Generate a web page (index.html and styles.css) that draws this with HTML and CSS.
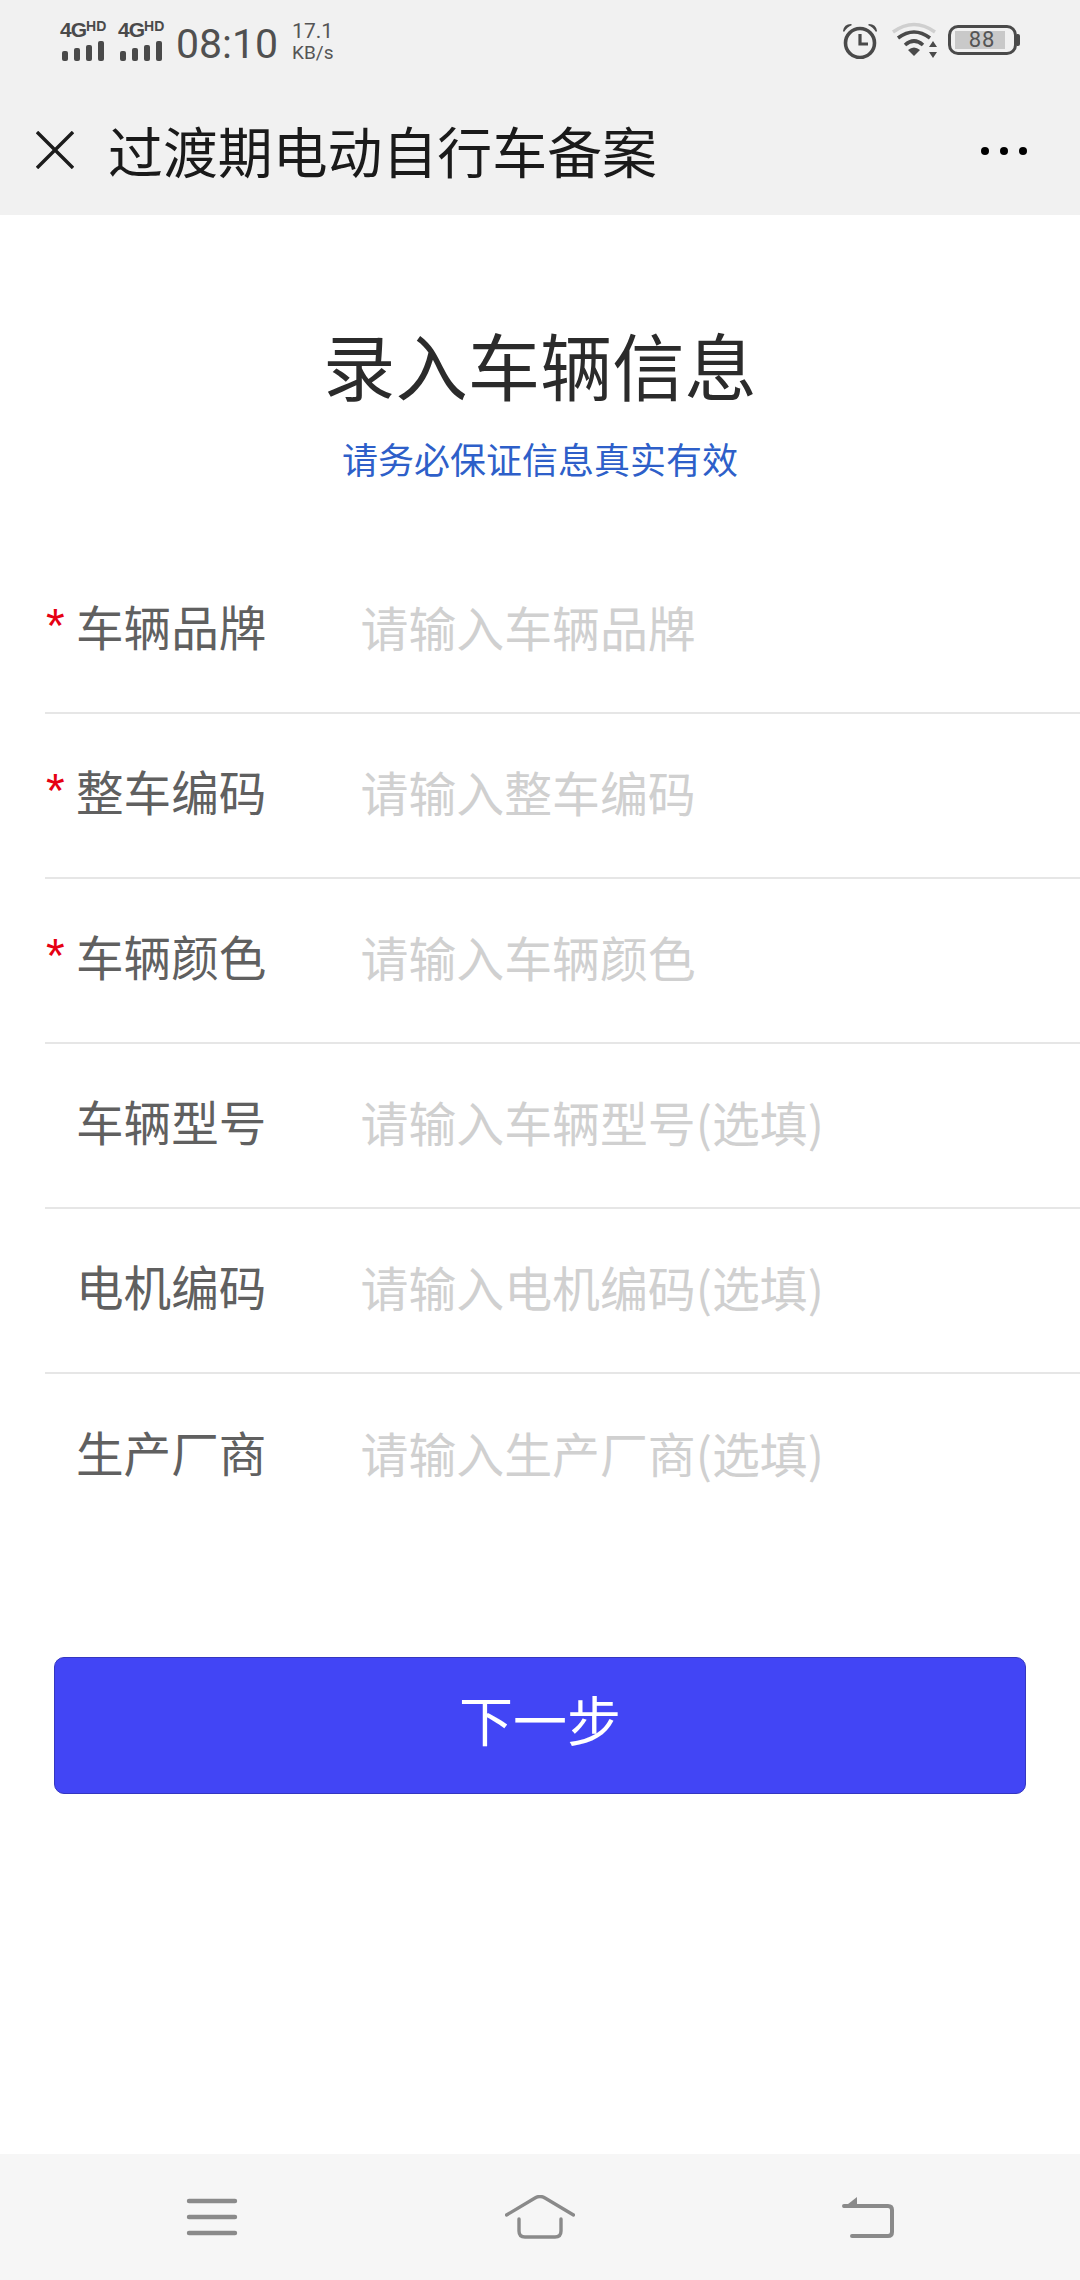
FILE: index.html
```html
<!DOCTYPE html>
<html lang="zh-CN">
<head>
<meta charset="utf-8">
<title>过渡期电动自行车备案</title>
<link rel="stylesheet" href="styles.css">
</head>
<body>
<div class="screen">
  <header class="top">
    <div class="status">
      <div class="status-left">
        <div class="sim">
          <div class="sim-label"><span class="g">4G</span><span class="hd">HD</span></div>
          <div class="bars"><i class="b1"></i><i class="b2"></i><i class="b3"></i><i class="b4"></i></div>
        </div>
        <div class="sim">
          <div class="sim-label"><span class="g">4G</span><span class="hd">HD</span></div>
          <div class="bars"><i class="b1"></i><i class="b2"></i><i class="b3"></i><i class="b4"></i></div>
        </div>
        <div class="time">08:10</div>
        <div class="speed"><span>17.1</span><span class="unit">KB/s</span></div>
      </div>
      <div class="status-right">
        <svg class="alarm" width="36" height="36" viewBox="0 0 36 36">
          <circle cx="18" cy="20" r="14.5" fill="none" stroke="#4a4a4a" stroke-width="3.6"/>
          <path d="M18 11v10h8" fill="none" stroke="#4a4a4a" stroke-width="3.2"/>
          <path d="M1 8Q2 1 9 1L10 2Q5 4 2 9ZM35 8Q34 1 27 1L26 2Q31 4 34 9Z" fill="#4a4a4a"/>
        </svg>
        <svg class="wifi" width="48" height="38" viewBox="0 0 48 38">
          <path d="M2 11Q23 -4 44 11" fill="none" stroke="#cfcfcf" stroke-width="3.4"/>
          <path d="M7 17Q23 5 39 17" fill="none" stroke="#4a4a4a" stroke-width="3.6"/>
          <path d="M14 24Q23 16 32 24" fill="none" stroke="#4a4a4a" stroke-width="3.6"/>
          <path d="M17 29Q23 24 29 29L23 35Z" fill="#4a4a4a"/>
          <path d="M42 20l4 6h-8zM42 37l4-6h-8z" fill="#4a4a4a"/>
        </svg>
        <div class="battery">
          <div class="battery-body"><div class="battery-fill">88</div></div>
          <div class="battery-cap"></div>
        </div>
      </div>
    </div>
    <nav class="nav">
      <svg class="close" width="38" height="38" viewBox="0 0 38 38"><path d="M1 1L37 37M37 1L1 37" stroke="#1c1c1c" stroke-width="3.4" fill="none"/></svg>
      <div class="nav-title">过渡期电动自行车备案</div>
      <div class="dots"><i></i><i></i><i></i></div>
    </nav>
  </header>
  <main class="main">
    <h1 class="heading">录入车辆信息</h1>
    <p class="sub">请务必保证信息真实有效</p>
    <form class="form">
      <div class="row"><span class="star">*</span><span class="label">车辆品牌</span><span class="ph">请输入车辆品牌</span></div>
      <div class="row"><span class="star">*</span><span class="label">整车编码</span><span class="ph">请输入整车编码</span></div>
      <div class="row"><span class="star">*</span><span class="label">车辆颜色</span><span class="ph">请输入车辆颜色</span></div>
      <div class="row"><span class="star"></span><span class="label">车辆型号</span><span class="ph">请输入车辆型号(选填)</span></div>
      <div class="row"><span class="star"></span><span class="label">电机编码</span><span class="ph">请输入电机编码(选填)</span></div>
      <div class="row"><span class="star"></span><span class="label">生产厂商</span><span class="ph">请输入生产厂商(选填)</span></div>
    </form>
    <button class="next" type="button">下一步</button>
  </main>
  <footer class="softkeys">
    <svg width="52" height="40" viewBox="0 0 52 40"><path d="M3 4H49M3 20H49M3 36H49" stroke="#8a8a8a" stroke-width="4.4" stroke-linecap="round" fill="none"/></svg>
    <svg width="70" height="44" viewBox="0 0 70 44"><path d="M1.500 20L30 3Q35 0 40 3L68.500 20" stroke="#8a8a8a" stroke-width="3.400" fill="none" stroke-linecap="round"/><path d="M14 24V36Q14 42 20 42H50Q56 42 56 36V24" stroke="#8a8a8a" stroke-width="3.400" fill="none" stroke-linecap="round"/></svg>
    <svg width="52" height="42" viewBox="0 0 52 42"><path d="M10 40H46Q50 40 50 36V14Q50 10 46 10H2" stroke="#8a8a8a" stroke-width="4" fill="none" stroke-linecap="round"/><path d="M1 12L15 1V12Z" fill="#8a8a8a"/></svg>
  </footer>
</div>
</body>
</html>
```
FILE: styles.css
```css
* { box-sizing: border-box; }
html, body { margin: 0; padding: 0; }
body {
  width: 1080px;
  height: 2280px;
  overflow: hidden;
  background: #fff;
  font-family: "Noto Sans CJK SC", "Noto Sans", sans-serif;
}
.screen { display: flex; flex-direction: column; width: 1080px; height: 2280px; }

.top { height: 215px; background: #f1f1f1; flex: none; }
.status {
  height: 84px;
  padding: 18px 60px 0 60px;
  display: flex;
  justify-content: space-between;
  align-items: flex-start;
}
.status-left { display: flex; align-items: flex-start; }
.sim { width: 48px; margin-right: 10px; margin-top: 2px; }
.sim-label { display: flex; align-items: flex-start; height: 19px; color: #4a4a4a; font-family: "Liberation Sans", sans-serif; font-weight: 700; white-space: nowrap; }
.g { font-size: 21px; line-height: 20px; letter-spacing: -1px; }
.hd { font-size: 14px; line-height: 12px; }
.bars { display: flex; align-items: flex-end; gap: 6px; height: 21px; margin-top: 1px; padding-left: 2px; }
.bars i { display: block; width: 6px; background: #4a4a4a; border-radius: 2px; }
.b1 { height: 10px; }
.b2 { height: 13px; }
.b3 { height: 16px; }
.b4 { height: 20px; }
.time { font-family: Roboto, sans-serif; font-size: 41px; line-height: 50px; color: #505050; margin-top: 1px; }
.speed { display: flex; flex-direction: column; margin-left: 14px; margin-top: 3px; color: #555; font-family: Roboto, sans-serif; font-size: 20px; line-height: 21px; }
.speed span:first-child { font-size: 21px; }
.unit { font-size: 19px; }
.status-right { display: flex; align-items: flex-start; margin-top: 6px; }
.alarm { margin-right: 13px; margin-top: -1px; }
.wifi { margin-right: 9px; margin-top: -3px; }
.battery { display: flex; align-items: center; margin-top: 1px; }
.battery-body { width: 69px; height: 30px; border: 3px solid #4a4a4a; border-radius: 10px; padding: 3px 9px 3px 4px; }
.battery-fill { height: 18px; padding-left: 4px; background: #c9c9c9; color: #555; font-family: Roboto, sans-serif; font-size: 22px; line-height: 18px; text-align: center; letter-spacing: 1px; }
.battery-cap { width: 3px; height: 12px; background: #4a4a4a; border-radius: 0 2px 2px 0; }

.nav { height: 131px; display: flex; align-items: center; padding: 0 53px 0 36px; }
.close { flex: none; }
.nav-title { flex: 1; margin-left: 34px; margin-bottom: 2px; font-size: 54.900px; line-height: 70px; color: #1a1a1a; }
.dots { display: flex; gap: 11px; margin-top: 2px; }
.dots i { display: block; width: 8px; height: 8px; border-radius: 50%; background: #000; }

.main { flex: 1; display: flex; flex-direction: column; }
.heading { margin: 109px 0 0; text-align: center; font-size: 72.300px; line-height: 80px; font-weight: 400; color: #2b2b2b; }
.sub { margin: 29px 0 0; text-align: center; font-size: 36px; line-height: 50px; color: #2e5fc9; }
.form { margin: 66px 0 0 45px; }
.row { display: flex; align-items: center; height: 165px; padding-bottom: 9px; border-bottom: 2px solid #e6e6e6; }
.row:last-child { border-bottom: none; }
.star { width: 31px; color: #e60012; font-size: 48px; line-height: 48px; padding-left: 1px; font-family: "Liberation Sans", sans-serif; }
.label { width: 284.500px; font-size: 47.600px; line-height: 60px; color: #606060; }
.ph { font-size: 47.900px; line-height: 60px; color: #d0d0d0; }
.next {
  display: block;
  width: 972px;
  height: 137px;
  margin: 118px 0 0 54px;
  border: 1px solid #3436c0;
  border-radius: 10px;
  background: #4245f5;
  color: #fff;
  font-family: inherit;
  font-size: 54px;
  line-height: 60px;
  padding: 0 0 14px;
}
.softkeys {
  height: 126px;
  flex: none;
  background: #f6f6f6;
  display: flex;
  align-items: center;
  padding: 0 186px;
  justify-content: space-between;
}
```
